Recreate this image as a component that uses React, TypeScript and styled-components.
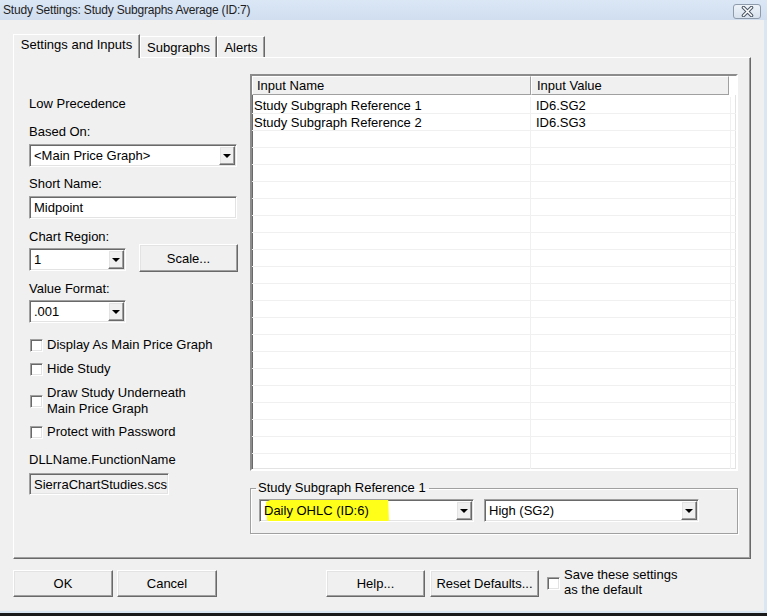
import React from "react";
import styled, { createGlobalStyle, css } from "styled-components";

const GlobalStyle = createGlobalStyle`
  html, body { margin: 0; padding: 0; }
  body {
    background: #f0f0f0;
    font-family: "Liberation Sans", Arial, sans-serif;
    font-size: 13px;
    color: #000;
  }
  * { box-sizing: border-box; }
`;

const sunken = css`
  border: 1px solid;
  border-color: #a0a0a0 #ffffff #ffffff #a0a0a0;
  box-shadow: inset 1px 1px 0 #696969, inset -1px -1px 0 #e3e3e3;
`;

const raised = css`
  border: 1px solid;
  border-color: #ffffff #696969 #696969 #ffffff;
  box-shadow: inset -1px -1px 0 #a0a0a0, inset 1px 1px 0 #e3e3e3;
`;

const Window = styled.div`
  width: 767px;
  height: 616px;
  display: flex;
  flex-direction: column;
  overflow: hidden;
  background: #f0f0f0;
  border-bottom: 3px solid #1b1b1b;
`;

const TitleBar = styled.div`
  height: 20px;
  flex: none;
  display: flex;
  align-items: center;
  justify-content: space-between;
  padding: 0 6px 0 3px;
  background: linear-gradient(#dbe7f5, #d1def0);
`;

const TitleText = styled.span`
  font-size: 12px;
  letter-spacing: -0.2px;
  color: #1e1e1e;
  white-space: nowrap;
`;

const CloseButton = styled.div`
  width: 28px;
  height: 15px;
  margin-top: 2px;
  border: 1px solid #8d9bab;
  border-radius: 3px;
  background: linear-gradient(#eef3f9, #d7e2ee);
  display: flex;
  align-items: center;
  justify-content: center;
`;

const Body = styled.div`
  flex: 1;
  display: flex;
  flex-direction: column;
  padding-left: 13px;
  border-right: 3px solid #dbe6f3;
  border-bottom: 2px solid #dbe6f3;
`;

const TabStrip = styled.div`
  margin-top: 14px;
  height: 23px;
  display: flex;
  align-items: flex-end;
  position: relative;
  z-index: 1;
`;

const Tab = styled.div<{ $active?: boolean; $w: number }>`
  width: ${(p) => p.$w}px;
  height: ${(p) => (p.$active ? 24 : 21)}px;
  margin-bottom: ${(p) => (p.$active ? -1 : 0)}px;
  display: flex;
  align-items: ${(p) => (p.$active ? "flex-start" : "center")};
  padding-top: ${(p) => (p.$active ? 2 : 0)}px;
  justify-content: center;
  background: #f0f0f0;
  border-top: 1px solid #ffffff;
  border-left: 1px solid #ffffff;
  border-right: 1px solid #696969;
  box-shadow: inset -1px 0 0 #a0a0a0;
  white-space: nowrap;
`;

const TabPanel = styled.div`
  width: 738px;
  height: 502px;
  flex: none;
  border: 1px solid;
  border-color: #ffffff #696969 #696969 #ffffff;
  box-shadow: inset -1px -1px 0 #a0a0a0;
  display: grid;
  grid-template-columns: 208px 488px;
  column-gap: 13px;
  padding: 16px 11px 0 15px;
`;

const LeftColumn = styled.div`
  display: flex;
  flex-direction: column;
  padding-top: 22px;
`;

const Label = styled.div<{ $mt?: number }>`
  line-height: 16px;
  margin-top: ${(p) => p.$mt ?? 0}px;
  white-space: nowrap;
`;

const Field = styled.div<{ $w: number; $h?: number; $mt?: number; $disabled?: boolean }>`
  ${sunken};
  position: relative;
  width: ${(p) => p.$w}px;
  height: ${(p) => p.$h ?? 23}px;
  margin-top: ${(p) => p.$mt ?? 0}px;
  background: ${(p) => (p.$disabled ? "#f0f0f0" : "#ffffff")};
  display: flex;
  align-items: center;
  padding: 1px;
  overflow: hidden;
  flex: none;
`;

const FieldText = styled.span`
  position: relative;
  z-index: 1;
  flex: 1;
  padding-left: 3px;
  white-space: nowrap;
  overflow: hidden;
`;

const DropButton = styled.div`
  ${raised};
  position: relative;
  z-index: 1;
  width: 16px;
  height: 100%;
  flex: none;
  background: #f0f0f0;
  display: flex;
  align-items: center;
  justify-content: center;
`;

const Triangle = styled.div`
  width: 0;
  height: 0;
  border-left: 4px solid transparent;
  border-right: 4px solid transparent;
  border-top: 4px solid #000;
  margin-top: 1px;
`;

const Highlight = styled.svg`
  position: absolute;
  left: 6px;
  top: -5px;
  z-index: 0;
`;

const Row = styled.div<{ $mt?: number }>`
  display: flex;
  align-items: flex-start;
  gap: 13px;
  margin-top: ${(p) => p.$mt ?? 0}px;
`;

const PushButton = styled.div<{ $w: number; $h?: number; $ml?: number }>`
  ${raised};
  width: ${(p) => p.$w}px;
  height: ${(p) => p.$h ?? 27}px;
  margin-left: ${(p) => p.$ml ?? 0}px;
  background: #f0f0f0;
  display: flex;
  align-items: center;
  justify-content: center;
  white-space: nowrap;
  flex: none;
`;

const Check = styled.div<{ $mt?: number; $ml?: number }>`
  display: flex;
  align-items: center;
  gap: 4px;
  margin-top: ${(p) => p.$mt ?? 0}px;
  margin-left: ${(p) => p.$ml ?? 1}px;
  line-height: 16px;
  white-space: nowrap;
  flex: none;
`;

const CheckBox = styled.div`
  ${sunken};
  width: 13px;
  height: 13px;
  background: #ffffff;
  flex: none;
`;

const RightColumn = styled.div`
  display: flex;
  flex-direction: column;
`;

const Table = styled.div`
  border: 2px solid;
  border-color: #8c8c8c #ffffff #ffffff #8c8c8c;
  box-shadow: inset 1px 1px 0 #696969, inset -1px -1px 0 #e3e3e3;
  height: 397px;
  background: #ffffff;
  overflow: hidden;
  display: flex;
  flex-direction: column;
`;

const HeaderRow = styled.div`
  display: grid;
  grid-template-columns: 279px 198px 1fr;
  height: 19px;
  background: #f0f0f0;
  flex: none;
`;

const HeaderCell = styled.div<{ $pl: number; $last?: boolean }>`
  padding-left: ${(p) => p.$pl}px;
  display: flex;
  align-items: center;
  border-top: 1px solid #ffffff;
  border-left: 1px solid #ffffff;
  border-right: ${(p) => (p.$last ? "none" : "1px solid #a0a0a0")};
  border-bottom: ${(p) => (p.$last ? "none" : "1px solid #a0a0a0")};
  background: ${(p) => (p.$last ? "#ffffff" : "#f0f0f0")};
  white-space: nowrap;
`;

const Rows = styled.div`
  padding-top: 2px;
  flex: 1;
`;

const DataRow = styled.div`
  display: grid;
  grid-template-columns: 279px 200px 1fr;
  height: 17px;
  border-bottom: 1px solid #f0f0f0;
`;

const DataCell = styled.div<{ $pl: number; $last?: boolean }>`
  padding-left: ${(p) => p.$pl}px;
  display: flex;
  align-items: center;
  border-right: ${(p) => (p.$last ? "none" : "1px solid #f0f0f0")};
  white-space: nowrap;
`;

const GroupBox = styled.fieldset`
  margin: 9px 0 0 0;
  padding: 3px 8px 11px 8px;
  border: 1px solid #a0a0a0;
  box-shadow: inset 1px 1px 0 #ffffff, 1px 1px 0 #ffffff;
  display: flex;
  gap: 10px;
  min-width: 0;
`;

const Legend = styled.legend`
  margin-left: -3px;
  padding: 0 3px 0 2px;
  line-height: 16px;
`;

const Footer = styled.div`
  display: flex;
  align-items: center;
  margin-top: 10px;
`;

const SaveText = styled.div`
  line-height: 15px;
  margin-top: -2px;
`;

const Arrow = () => (
  <DropButton>
    <Triangle />
  </DropButton>
);

const rows: [string, string][] = [
  ["Study Subgraph Reference 1", "ID6.SG2"],
  ["Study Subgraph Reference 2", "ID6.SG3"],
];

export default function App() {
  const filler = Array.from({ length: 22 - rows.length }, () => ["", ""] as [string, string]);
  return (
    <>
      <GlobalStyle />
      <Window>
        <TitleBar>
          <TitleText>Study Settings: Study Subgraphs Average (ID:7)</TitleText>
          <CloseButton>
            <svg width="13" height="11" viewBox="0 0 13 11">
              <path d="M2.5 1.5 L10.5 9.5 M10.5 1.5 L2.5 9.5" stroke="#4a5666" strokeWidth="3.6" strokeLinecap="round" />
              <path d="M2.5 1.5 L10.5 9.5 M10.5 1.5 L2.5 9.5" stroke="#ffffff" strokeWidth="1.6" strokeLinecap="round" />
            </svg>
          </CloseButton>
        </TitleBar>
        <Body>
          <TabStrip>
            <Tab $active $w={127}>Settings and Inputs</Tab>
            <Tab $w={77}>Subgraphs</Tab>
            <Tab $w={48}>Alerts</Tab>
          </TabStrip>
          <TabPanel>
            <LeftColumn>
              <Label>Low Precedence</Label>
              <Label $mt={12}>Based On:</Label>
              <Field $w={208} $mt={4}>
                <FieldText>&lt;Main Price Graph&gt;</FieldText>
                <Arrow />
              </Field>
              <Label $mt={9}>Short Name:</Label>
              <Field $w={208} $mt={4}>
                <FieldText>Midpoint</FieldText>
              </Field>
              <Label $mt={10}>Chart Region:</Label>
              <Row $mt={-1}>
                <Field $w={97} $mt={4}>
                  <FieldText>1</FieldText>
                  <Arrow />
                </Field>
                <PushButton $w={99} $h={28}>Scale...</PushButton>
              </Row>
              <Label $mt={9}>Value Format:</Label>
              <Field $w={97} $h={23} $mt={3}>
                <FieldText>.001</FieldText>
                <Arrow />
              </Field>
              <Check $mt={14}>
                <CheckBox />
                Display As Main Price Graph
              </Check>
              <Check $mt={8}>
                <CheckBox />
                Hide Study
              </Check>
              <Check $mt={8}>
                <CheckBox />
                <span>
                  Draw Study Underneath
                  <br />
                  Main Price Graph
                </span>
              </Check>
              <Check $mt={7}>
                <CheckBox />
                Protect with Password
              </Check>
              <Label $mt={12}>DLLName.FunctionName</Label>
              <Field $w={140} $h={22} $mt={5} $disabled>
                <FieldText>SierraChartStudies.scsf_StudySubgraphsAverage</FieldText>
              </Field>
            </LeftColumn>
            <RightColumn>
              <Table>
                <HeaderRow>
                  <HeaderCell $pl={4}>Input Name</HeaderCell>
                  <HeaderCell $pl={5}>Input Value</HeaderCell>
                  <HeaderCell $pl={0} $last />
                </HeaderRow>
                <Rows>
                  {[...rows, ...filler].map(([name, value], i) => (
                    <DataRow key={i}>
                      <DataCell $pl={2}>{name}</DataCell>
                      <DataCell $pl={5}>{value}</DataCell>
                      <DataCell $pl={0} $last />
                    </DataRow>
                  ))}
                </Rows>
              </Table>
              <GroupBox>
                <Legend>Study Subgraph Reference 1</Legend>
                <Field $w={215} $h={23}>
                  <Highlight width="124" height="29" viewBox="0 0 124 29">
                    <path
                      d="M0 7 C5 4 12 3 20 3.5 C38 4.5 58 3 78 4 C94 4.5 108 3 122 0 L123 27 C107 28 90 26 70 27.5 C50 28 30 27 12 28 C7 28 3 27 1 25 Z"
                      fill="#ffff1a"
                    />
                  </Highlight>
                  <FieldText>Daily OHLC (ID:6)</FieldText>
                  <Arrow />
                </Field>
                <Field $w={215} $h={23}>
                  <FieldText>High (SG2)</FieldText>
                  <Arrow />
                </Field>
              </GroupBox>
            </RightColumn>
          </TabPanel>
          <Footer>
            <PushButton $w={100}>OK</PushButton>
            <PushButton $w={100} $ml={4}>Cancel</PushButton>
            <PushButton $w={99} $ml={109}>Help...</PushButton>
            <PushButton $w={109} $ml={5}>Reset Defaults...</PushButton>
            <Check $ml={8}>
              <CheckBox />
              <SaveText>
                Save these settings
                <br />
                as the default
              </SaveText>
            </Check>
          </Footer>
        </Body>
      </Window>
    </>
  );
}
